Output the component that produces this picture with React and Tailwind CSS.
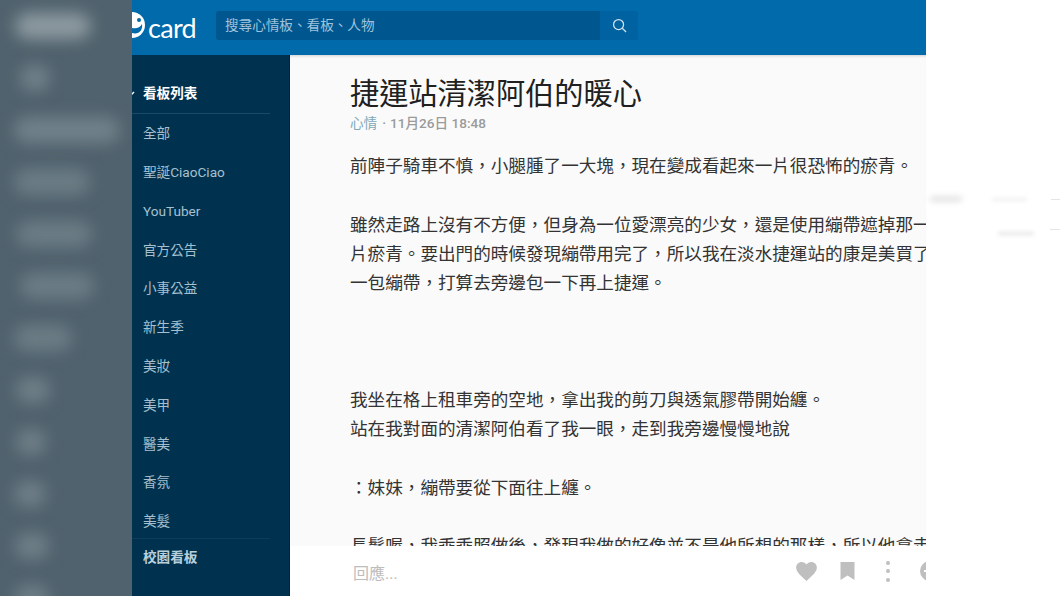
import React from "react";

const blurRows = [
  ["w-[76px]", "ml-[15px]", "bg-[#8d9aa1]"],
  ["w-[30px]", "ml-[20px]", "bg-[#71818a]"],
  ["w-[106px]", "ml-[14px]", "bg-[#71818a]"],
  ["w-[76px]", "ml-[14px]", "bg-[#6b7c85]"],
  ["w-[76px]", "ml-[16px]", "bg-[#6b7c85]"],
  ["w-[74px]", "ml-[20px]", "bg-[#6b7c85]"],
  ["w-[58px]", "ml-[14px]", "bg-[#6b7c85]"],
  ["w-[34px]", "ml-[16px]", "bg-[#6f7f88]"],
  ["w-[30px]", "ml-[16px]", "bg-[#6f7f88]"],
  ["w-[32px]", "ml-[14px]", "bg-[#6f7f88]"],
  ["w-[34px]", "ml-[15px]", "bg-[#6f7f88]"],
  ["w-[34px]", "ml-[15px]", "bg-[#6f7f88]"],
];

const boards = ["全部", "聖誕CiaoCiao", "YouTuber", "官方公告", "小事公益", "新生季", "美妝", "美甲", "醫美", "香氛", "美髮"];

const paragraphs = [
  "前陣子騎車不慎，小腿腫了一大塊，現在變成看起來一片很恐怖的瘀青。",
  "",
  "雖然走路上沒有不方便，但身為一位愛漂亮的少女，還是使用繃帶遮掉那一",
  "片瘀青。要出門的時候發現繃帶用完了，所以我在淡水捷運站的康是美買了",
  "一包繃帶，打算去旁邊包一下再上捷運。",
  "",
  "",
  "",
  "我坐在格上租車旁的空地，拿出我的剪刀與透氣膠帶開始纏。",
  "站在我對面的清潔阿伯看了我一眼，走到我旁邊慢慢地說",
  "",
  "：妹妹，繃帶要從下面往上纏。",
  "",
  "長髮喔，我乖乖照做後，發現我做的好像並不是他所想的那樣，所以他拿走",
];

export default function App() {
  return (
    <div lang="zh-TW" className="flex h-[596px] w-[1060px] overflow-hidden bg-white font-['Roboto','Noto_Sans_CJK_TC',sans-serif]">
      <aside className="flex h-full w-[132px] shrink-0 flex-col overflow-hidden bg-[#50626d]">
        {blurRows.map(([w, ml, bg], i) => (
          <div key={i} className="flex h-[52px] shrink-0 items-center">
            <div className={`h-[26px] rounded-full blur-[8px] ${w} ${ml} ${bg}`} />
          </div>
        ))}
      </aside>

      <div className="flex h-full w-[794px] shrink-0 flex-col">
        <header className="flex h-[55px] shrink-0 items-center overflow-hidden bg-[#006aaa]">
          <svg viewBox="0 0 28 26" className="-ml-[14px] mt-[-5px] h-[26px] w-[28px] shrink-0">
            <circle cx="14" cy="13" r="13" fill="#ffffff" />
            <circle cx="21" cy="8" r="2" fill="#006aaa" />
            <path d="M14 16 C18 17 22 16 24 12 C25 18 21 23 14 21 Z" fill="#006aaa" />
          </svg>
          <span className="ml-[2px] w-[68px] shrink-0 text-[27px] leading-[55px] tracking-[-0.7px] text-white font-['Lato',sans-serif]">card</span>
          <div className="mt-[-4px] flex h-[29px] w-[422px] overflow-hidden rounded-[3px]">
            <div className="flex flex-1 items-center bg-[#00568e] pl-[9px] text-[13.6px] text-[#9fc3dc]">搜尋心情板、看板、人物</div>
            <div className="flex w-[38px] items-center justify-center bg-[#0062a0]">
              <svg viewBox="0 0 24 24" className="h-[15px] w-[15px]" fill="none" stroke="#d3e4f0" strokeWidth="2">
                <circle cx="10.5" cy="10.5" r="8" />
                <path d="M16.5 16.5 L22.5 22.5" />
              </svg>
            </div>
          </div>
        </header>

        <div className="flex min-h-0 flex-1">
          <nav className="flex w-[158px] shrink-0 flex-col overflow-hidden border-r border-[#00263d] bg-[#00324f]">
            <div className="mt-[19px] mr-[19px] flex h-[40px] shrink-0 items-center border-b border-[#1a4a66] pl-[11px] text-[13.6px] font-bold text-white">
              <svg viewBox="0 0 10 6" className="-ml-[18px] mr-[8px] h-[6px] w-[10px] shrink-0" fill="none" stroke="#ffffff" strokeWidth="1.5">
                <path d="M1 1 L5 5 L9 1" />
              </svg>
              看板列表
            </div>
            <ul className="h-[424px] shrink-0 overflow-hidden">
              {boards.map((b) => (
                <li key={b} className="flex h-[38.8px] items-center pl-[11px] text-[13.6px] text-[#a6c0cf]">{b}</li>
              ))}
            </ul>
            <div className="mr-[19px] flex h-[38px] shrink-0 items-center border-t border-[#0f3d58] pl-[11px] text-[13.6px] font-bold text-[#b8cfdc]">校園看板</div>
          </nav>

          <main className="flex min-w-0 flex-1 flex-col overflow-hidden bg-white">
            <article className="min-h-0 flex-1 overflow-hidden bg-[#fafafa] pl-[60px] shadow-[inset_0_3px_3px_-2px_rgba(0,0,0,0.18)]">
              <h1 className="mt-[21px] whitespace-nowrap text-[29.2px] leading-[36px] font-normal text-[#202020]">捷運站清潔阿伯的暖心</h1>
              <div className="mt-[1px] flex h-[20px] items-center text-[13.6px] font-medium text-[#9a9a9a]">
                <span className="font-normal text-[#7fa9b8]">心情</span>
                <span className="ml-[5px] mr-[4px]">·</span>
                <span>11月26日 18:48</span>
              </div>
              <div className="mt-[19px] text-[17.6px] leading-[29.27px] text-[#333333]">
                {paragraphs.map((p, i) => (
                  <p key={i} className="h-[29.27px] whitespace-nowrap">{p}</p>
                ))}
              </div>
            </article>
            <footer className="flex h-[50px] shrink-0 items-center bg-white pl-[63px]">
              <span className="mt-[5px] w-[443px] shrink-0 text-[16px] text-[#bdbdbd]">回應...</span>
              <svg viewBox="0 0 24 22" className="h-[19px] w-[21px] shrink-0" fill="#bfbfbf">
                <path d="M12 22 C4 15 0 11 0 6.5 C0 2.8 2.8 0 6.5 0 C8.7 0 10.8 1 12 2.8 C13.2 1 15.3 0 17.5 0 C21.2 0 24 2.8 24 6.5 C24 11 20 15 12 22 Z" />
              </svg>
              <svg viewBox="0 0 14 18" className="ml-[23px] h-[18px] w-[15px] shrink-0" fill="#bfbfbf">
                <path d="M0 0 H14 V18 L7 13.5 L0 18 Z" />
              </svg>
              <div className="ml-[31px] flex h-[21px] shrink-0 flex-col justify-between">
                <span className="h-[4px] w-[4px] rounded-full bg-[#bfbfbf]" />
                <span className="h-[4px] w-[4px] rounded-full bg-[#bfbfbf]" />
                <span className="h-[4px] w-[4px] rounded-full bg-[#bfbfbf]" />
              </div>
              <svg viewBox="0 0 20 20" className="ml-[30px] h-[20px] w-[20px] shrink-0">
                <circle cx="10" cy="10" r="10" fill="#bfbfbf" />
                <rect x="4" y="9" width="3" height="2" fill="#ffffff" />
              </svg>
            </footer>
          </main>
        </div>
      </div>

      <div className="flex min-w-0 flex-1 flex-col pt-[194px]">
        <div className="flex h-[10px] items-center">
          <div className="ml-[4px] h-[4px] w-[34px] rounded-full bg-[#d6d6d6] blur-[3px]" />
          <div className="ml-[30px] h-[3px] w-[36px] rounded-full bg-[#eeeeee] blur-[2px]" />
          <div className="ml-[24px] h-[1px] w-[10px] bg-[#e4e4e4]" />
        </div>
        <div className="mt-[20px] flex h-[10px] items-center justify-end">
          <div className="h-[1px] w-[10px] bg-[#e4e4e4]" />
        </div>
        <div className="mt-[-2px] ml-[72px] h-[3px] w-[36px] rounded-full bg-[#e4e4e4] blur-[2px]" />
      </div>
    </div>
  );
}
